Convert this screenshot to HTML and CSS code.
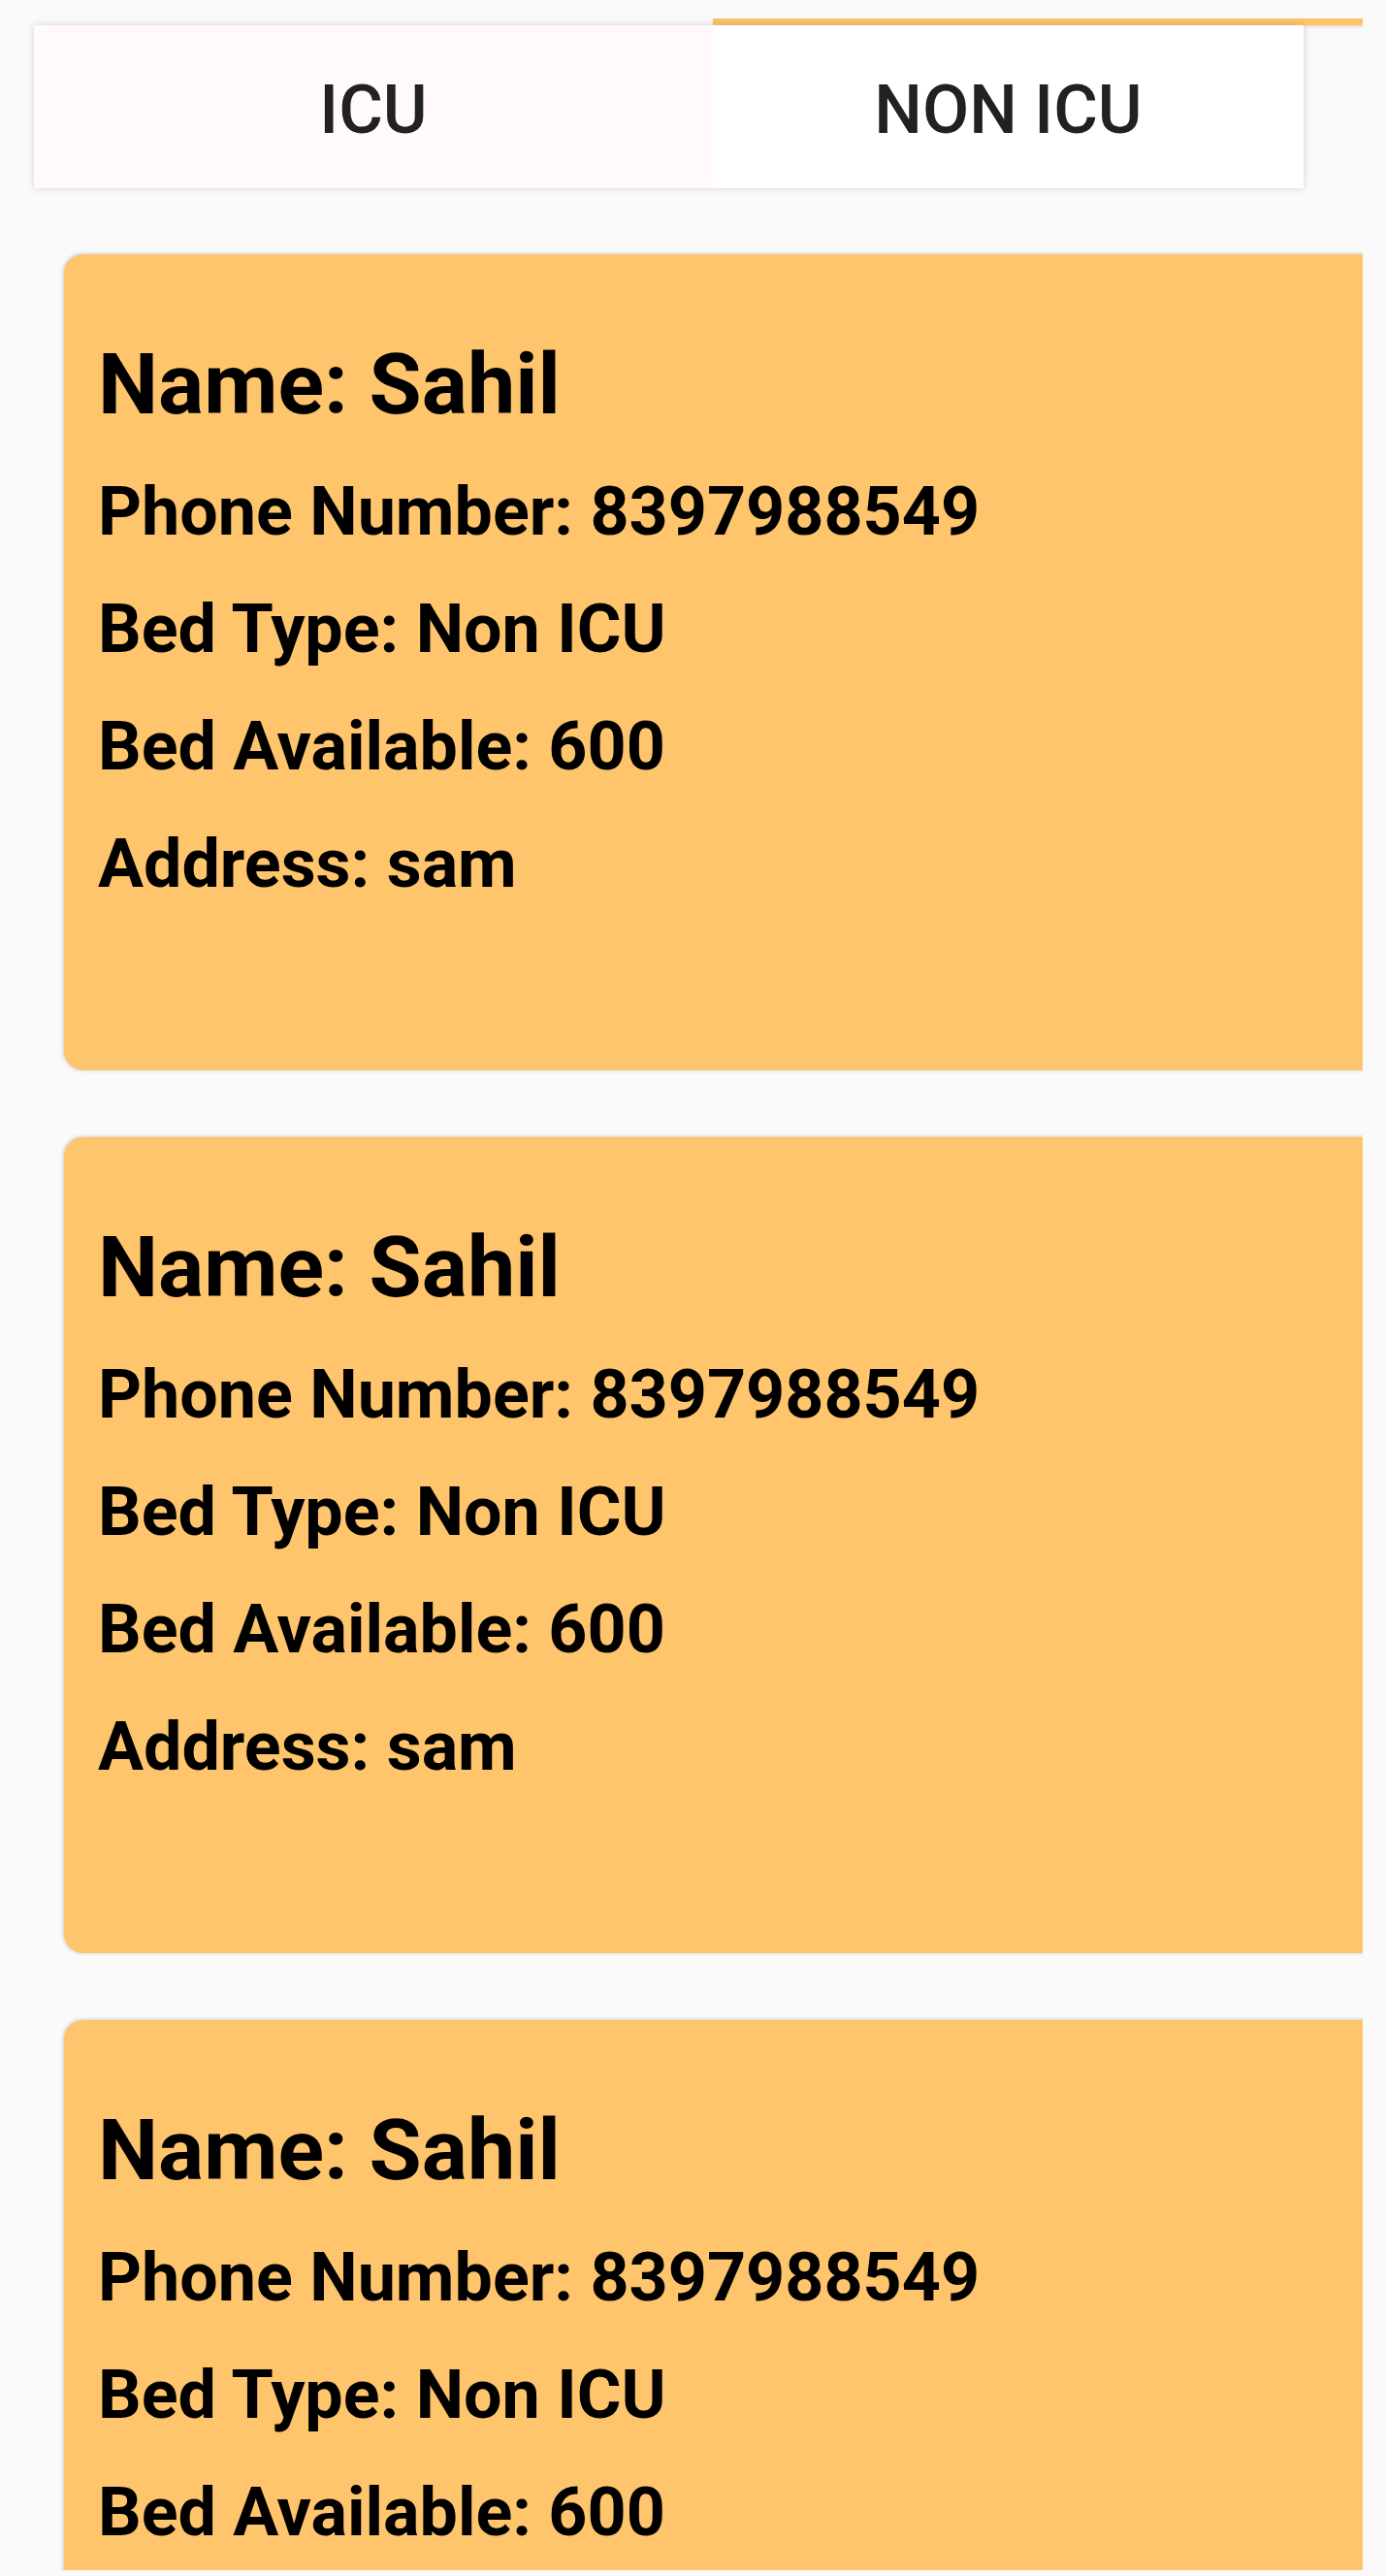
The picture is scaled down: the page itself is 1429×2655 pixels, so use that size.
FILE: index.html
```html
<!DOCTYPE html>
<html lang="en">
<head>
<meta charset="utf-8">
<title>Beds</title>
<link rel="stylesheet" href="styles.css">
</head>
<body>
<div class="screen">
  <div class="indicator"></div>
  <div class="tabs">
    <div class="tab tab-icu">ICU</div>
    <div class="tab tab-non">NON ICU</div>
  </div>
  <div class="list">
    <div class="card">
      <div class="name">Name: Sahil</div>
      <div class="line">Phone Number: 8397988549</div>
      <div class="line">Bed Type: Non ICU</div>
      <div class="line">Bed Available: 600</div>
      <div class="line">Address: sam</div>
    </div>
    <div class="card">
      <div class="name">Name: Sahil</div>
      <div class="line">Phone Number: 8397988549</div>
      <div class="line">Bed Type: Non ICU</div>
      <div class="line">Bed Available: 600</div>
      <div class="line">Address: sam</div>
    </div>
    <div class="card">
      <div class="name">Name: Sahil</div>
      <div class="line">Phone Number: 8397988549</div>
      <div class="line">Bed Type: Non ICU</div>
      <div class="line">Bed Available: 600</div>
      <div class="line">Address: sam</div>
    </div>
  </div>
</div>
</body>
</html>
```

FILE: styles.css
```css
html, body {
  margin: 0;
  padding: 0;
  background: #fafafa;
}

body {
  font-family: Roboto, "Liberation Sans", sans-serif;
}

.screen {
  width: 1405px;
  height: 2649px;
  overflow: hidden;
  display: flex;
  flex-direction: column;
}

.indicator {
  flex: none;
  margin-top: 19px;
  margin-left: 735px;
  width: 670px;
  height: 7px;
  background: #ffc46b;
  box-shadow: 0 2px 2px rgba(160, 110, 30, 0.18);
}

.tabs {
  flex: none;
  margin-left: 35px;
  width: 1309px;
  height: 168px;
  display: flex;
  box-shadow: 0 0 8px rgba(0, 0, 0, 0.16);
}

.tab {
  display: flex;
  align-items: center;
  justify-content: center;
  box-sizing: border-box;
  padding-top: 6px;
  font-size: 70px;
  font-weight: 500;
  color: #212121;
  text-transform: uppercase;
  line-height: 1;
}

.tab-icu {
  width: 700px;
  background: #fff9f9;
}

.tab-non {
  flex: 1;
  background: #ffffff;
}

.list {
  display: flex;
  flex-direction: column;
  gap: 69px;
  margin-top: 68px;
  margin-left: 66px;
}

.card {
  flex: none;
  width: 1400px;
  height: 841px;
  box-sizing: border-box;
  padding: 62px 0 0 35px;
  background: #ffc56d;
  border-radius: 20px;
  box-shadow: -1px 0 4px rgba(0, 0, 0, 0.14), 0 -1px 4px rgba(0, 0, 0, 0.08);
  color: #000;
  font-weight: 700;
}

.name {
  font-size: 88px;
  line-height: 143px;
}

.line {
  font-size: 70px;
  line-height: 121px;
}
```
